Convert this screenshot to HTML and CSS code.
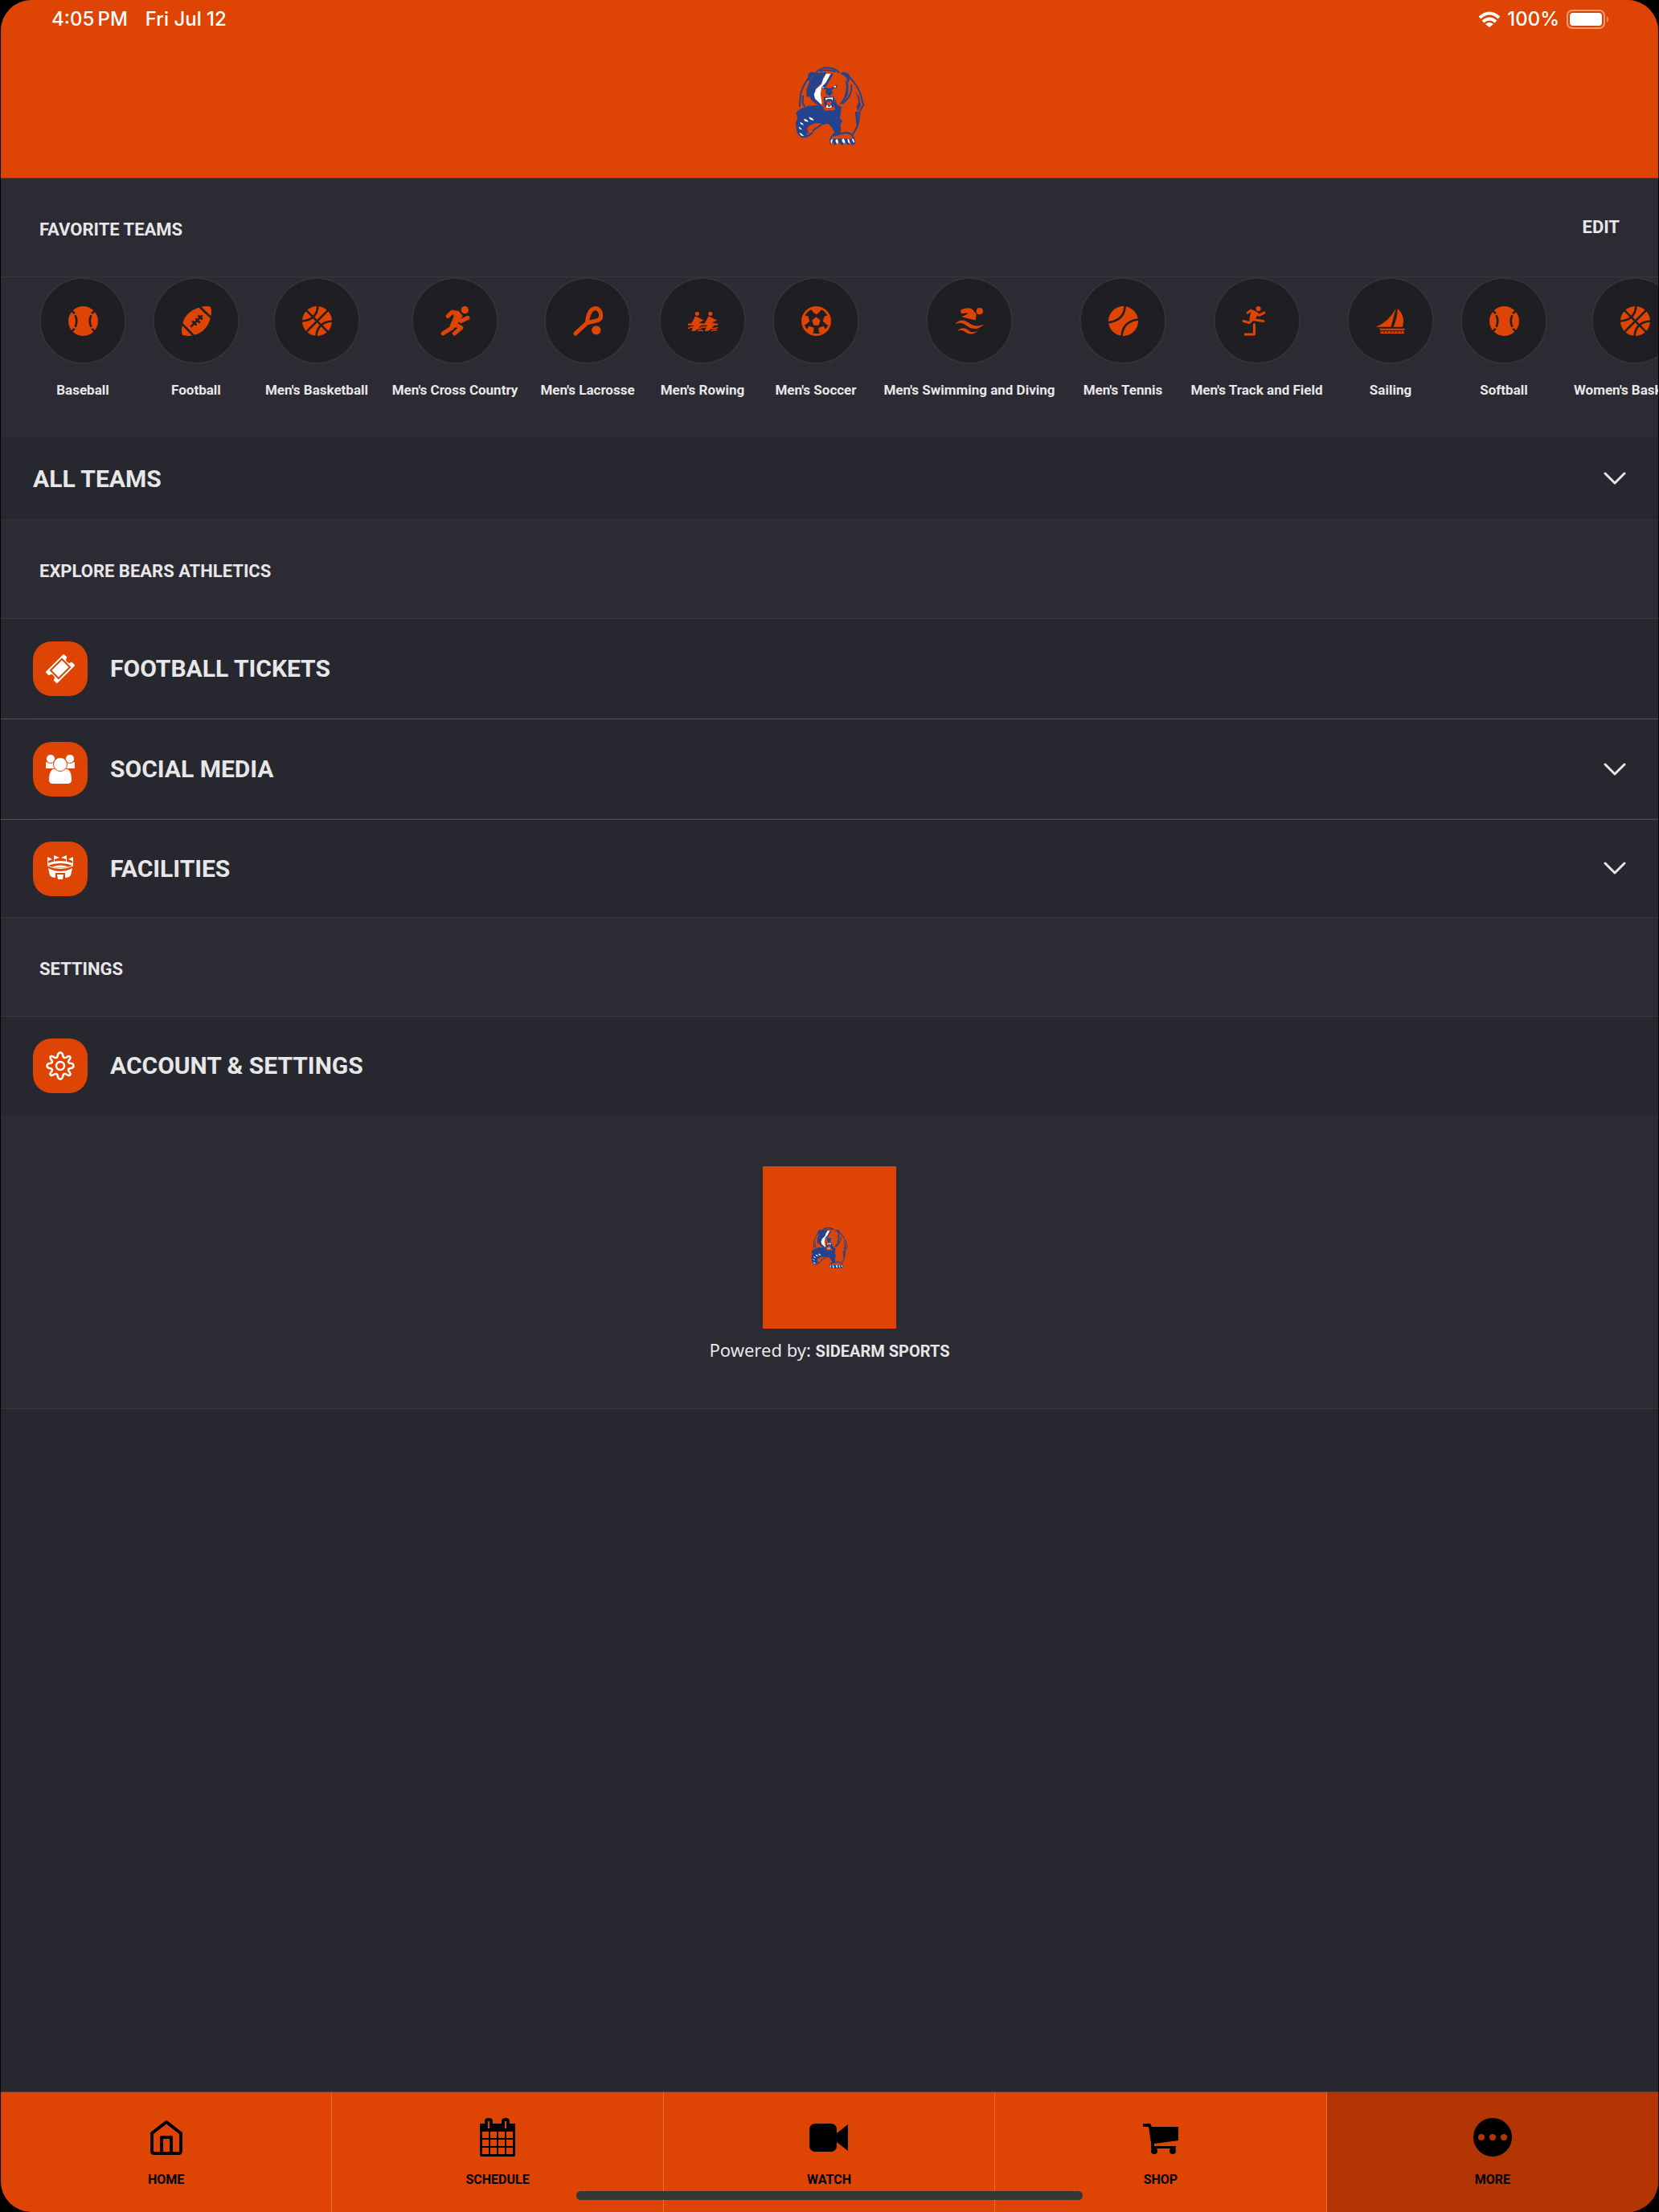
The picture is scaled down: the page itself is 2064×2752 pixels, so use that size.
FILE: index.html
```html
<!DOCTYPE html>
<html lang="en">
<head>
    <meta charset="UTF-8">
    <meta name="viewport" content="width=device-width, initial-scale=1.0">
    <title>Bears Athletics - More</title>
    <link rel="stylesheet" href="styles.css">
</head>
<body>
    <!-- Shared icon shapes -->
    <svg class="sprite" aria-hidden="true">
        <symbol id="bear" viewBox="90 68 258 298">
            <g fill="none" stroke="#23438f" stroke-width="6" stroke-linejoin="round">
                <path d="M168 92 Q184 77 204 75 Q232 73 254 93 M182 88 Q208 78 240 90"/>
                <path d="M142 110 Q122 136 112 166 L108 196 L107 220 M119 178 L118 206 L126 220"/>
                <path d="M288 106 Q322 140 332 172 L343 213 L330 235 L326 270 L320 294 L304 322"/>
                <path d="M298 138 Q302 164 288 184 Q280 196 266 208"/>
                <path d="M108 232 L97 242 L102 262 L95 280 L100 312 L120 332 L142 326 Q152 320 158 306 L188 286"/>
                <path d="M159 280 Q136 288 134 304 Q134 320 150 318" />
                <path d="M222 336 L232 322 Q248 315 264 319 Q288 310 302 326 L308 336"/>
            </g>
            <path fill="#23438f" d="M138 102 Q140 91 152 90 L171 94 Q150 106 142 126 L136 118Z M291 102 Q284 90 268 91 L256 96 Q274 102 282 116 L284 138 L291 122Z"/>
            <path fill="#23438f" d="M170 94 L206 91 L190 128 L166 154 L162 180 L188 216 L196 224 Q154 208 142 180 L132 184 L133 154 L144 124 L156 106Z"/>
            <path fill="#23438f" d="M108 228 L138 216 L170 214 L196 220 L204 232 L238 232 L234 212 L240 192 L246 212 L262 220 L256 262 L266 272 L258 284 L260 306 L256 324 L230 330 L236 316 L228 298 L212 282 L194 286 L180 280 L168 280 L142 288 L132 304 L134 334 L112 334 L97 316 L94 282 L102 260 L96 242Z"/>
            <path fill="#23438f" d="M220 96 L232 97 L212 132 L204 146 L186 145 L194 132 L208 116Z M186 142 L206 150 L222 150 L246 137 L244 150 L232 152 L226 158 L229 168 L220 180 L206 174 L202 164 L206 156 L188 152Z"/>
            <path fill="#23438f" d="M196 183 L236 182 L236 214 L228 224 L206 224 L198 216Z"/>
            <path fill="#23438f" d="M312 162 L326 180 L334 214 L322 238 L318 218 L326 204 L322 184Z M312 238 L324 238 L324 276 L318 292Z M276 118 L288 138 L286 174 L268 206 L254 212 L272 184 L280 150Z"/>
            <path fill="#23438f" d="M217 338 L310 338 L314 356 L302 362 L292 350 L290 362 L276 354 L264 362 L252 352 L238 362 L230 350 L220 360Z"/>
            <path fill="#fff" d="M205 97 L222 97 L204 130 L188 147 L184 174 L189 202 L188 212 L164 190 L160 174 L168 154 L188 136 L194 116Z"/>
            <path fill="#fff" d="M190 146l7 1v3h-7z M233 144l8-2v6h-6z M202 187 L230 185 L229 196 L224 190 L208 191 L205 198Z M205 217 L210 211 L212 219 L220 219 L223 211 L226 222 L206 224Z"/>
            <path fill="#de4504" d="M208 196 L216 202 L223 196 L224 208 L216 216 L208 208Z M194 222 L202 224 L206 230 L232 230 L232 224 L236 232 L200 234Z M134 302 Q138 288 162 282 L164 286 Q154 294 154 312 L142 320Z"/>
            <path fill="#fff" d="M140 257l14 5 6 9-14-4z M122 264l12 4 6 8-14-3z M108 276l9 4 6 8-12-4z M103 293l8 5 5 8-10-5z M105 316l8 2 11 11-12-3z M222 344l8-7-3 14-4 7z M239 345l7-7 5 12-6 8z M264 339l7-1 5 13-4 5-8-8z M284 338l6 3 4 15-8-5z M300 338l7 2 4 14-7-5z"/>
        </symbol>
        <symbol id="baseball" viewBox="0 0 36 36">
            <ellipse cx="18" cy="18" rx="18" ry="18"/>
            <path class="cut" d="M4 5 Q10 11 10 18 T4 31 M32 5 Q26 11 26 18 T32 31"/>
            <path class="stitch" d="M5 11l6-2M5 25l6 2M31 11l-6-2M31 25l-6 2"/>
        </symbol>
        <symbol id="football" viewBox="0 0 36 36">
            <path d="M23 1 Q32-1 35 1 Q37 6 35 14 Q32 25 24 31 Q17 36 8 36 L1 35 Q-1 30 1 22 Q4 6 23 1Z"/>
            <path class="cut" d="M20-1 L37 15 M-1 20 L16 37 M11 25 L25 11 M13 18 L18 23 M17 15 L22 20 M20 11 L25 16"/>
        </symbol>
        <symbol id="basketball" viewBox="0 0 36 36">
            <circle cx="18" cy="18" r="18"/>
            <path class="cut" d="M4 4 L32 32 M32 4 L4 32 M19-1 Q18 17-1 18 M17 37 Q18 19 37 18"/>
        </symbol>
        <symbol id="runner" viewBox="0 0 36 36">
            <circle cx="29.500" cy="4.500" r="4.500"/>
            <path class="limb" d="M9 12 L14 7 L21 8 M25 18 L33 14 M14 26 L3 33 M18 22 L25 26 L17 33"/>
            <path d="M14 5 L24 8 L27 12 L21 21 L24 25 L17 26 L11 24 L16 13Z"/>
        </symbol>
        <symbol id="lacrosse" viewBox="0 0 36 36">
            <path class="limb" d="M3 33 L17 20 Q18 8 23 4 Q29 0 33 7 Q36 14 30 17 L18 20"/>
            <circle cx="28" cy="29" r="5.500"/>
        </symbol>
        <symbol id="rowing" viewBox="0 0 36 36">
            <circle cx="11" cy="9" r="2.500"/><circle cx="27" cy="9" r="2.500"/>
            <path d="M9 12 L19 17 L13 20 L18 21 L9 30 L4 30 L8 22 L4 21Z M25 12 L35 17 L29 20 L34 21 L25 30 L20 30 L24 22 L20 21Z M0 21 H36 V23 H0Z"/>
            <path class="thin" d="M0 27 Q4 24 8 26 T16 26 T24 26 T36 26 M12 30 Q15 28 18 30 M28 30 Q31 28 35 29"/>
        </symbol>
        <symbol id="soccer" viewBox="0 0 36 36">
            <circle cx="18" cy="18" r="18"/>
            <circle cx="18" cy="18" r="15" fill="#1f1e23"/>
            <path d="M11 2 H25 L22 7 L18 10 L14 7Z M2 11 L8 12 L10 18 L6 22 L2 23Z M34 11 L28 12 L26 18 L30 22 L34 23Z M6 29 L9 24 L15 26 L15 31 L12 34Z M30 29 L27 24 L21 26 L21 31 L24 34Z M18 13 L23 17 L21 23 H15 L13 17Z"/>
        </symbol>
        <symbol id="swim" viewBox="0 0 36 36">
            <circle cx="30" cy="6" r="4"/>
            <path d="M8 4 Q16 1 20 3 L26 9 L25 17 L8 13 L16 9 L14 8 L8 9 Q6 6 8 4Z"/>
            <path d="M0 22 Q6 15 13 18 L22 23 Q28 25 35 22 Q28 30 18 26 L10 21 Q5 19 0 22Z M3 30 Q7 25 13 27 L19 31 Q23 32 28 30 Q21 36 14 32 Q8 27 3 30Z"/>
        </symbol>
        <symbol id="tennis" viewBox="0 0 36 36">
            <circle cx="18" cy="18" r="18"/>
            <path class="cut" d="M20-1 Q20 17-1 20 M16 37 Q17 18 37 16"/>
        </symbol>
        <symbol id="track" viewBox="0 0 36 36">
            <circle cx="20" cy="3" r="3"/>
            <path class="track-line" d="M7 8 L11 5 L17 8 L13 16 L26 18 M17 8 L21 11 L27 8 M13 16 L9 20 L2 18 M15 22 V34 H4"/>
            <path d="M11 6 L17 7 L19 11 L16 16 L9 17Z"/>
        </symbol>
        <symbol id="sail" viewBox="0 0 36 36">
            <path d="M24 3 L18 25 H0 Q15 19 24 3Z M26 3 Q36 12 32 25 H21 Q26 14 26 3Z M4 27 H35 L34 29 H5Z M5 30h29v3H5z"/>
            <path class="hull-line" d="M5 31 H34"/>
        </symbol>
        <symbol id="chevron" viewBox="0 0 28 17">
            <path fill="none" stroke="#e7e7e7" stroke-width="3" stroke-linecap="round" stroke-linejoin="round" d="M2 2 L14 14 L26 2"/>
        </symbol>
    </svg>

    <div class="screen">
        <header>
            <div class="status">
                <span>4:05&#8201;PM</span>
                <span class="date">Fri Jul 12</span>
                <svg class="wifi" viewBox="0 0 28 20" fill="none" stroke="#fff" stroke-width="4">
                    <path d="M2 8 Q14-3 26 8 M6 13 Q14 6 22 13"/>
                    <path fill="#fff" stroke="none" d="M9 16 Q14 12 19 16 L14 20Z"/>
                </svg>
                <span>100%</span>
                <svg class="battery" viewBox="0 0 54 24">
                    <rect x="1" y="1" width="46" height="22" rx="6" fill="none" stroke="#ef9b78" stroke-width="2"/>
                    <rect x="4" y="4" width="40" height="16" rx="4" fill="#fff"/>
                    <path d="M50 8 Q54 12 50 16Z" fill="#ef9b78"/>
                </svg>
            </div>
            <svg class="logo" role="img" aria-label="Bears"><use href="#bear"/></svg>
        </header>

        <main>
            <!-- Favorite teams -->
            <div class="section-title bordered">
                <h2>FAVORITE TEAMS</h2>
                <button class="edit" type="button">EDIT</button>
            </div>
            <ul class="teams">
                <li><a href="#"><span class="circle"><svg><use href="#baseball"/></svg></span>Baseball</a></li>
                <li><a href="#"><span class="circle"><svg><use href="#football"/></svg></span>Football</a></li>
                <li><a href="#"><span class="circle"><svg><use href="#basketball"/></svg></span>Men's Basketball</a></li>
                <li><a href="#"><span class="circle"><svg><use href="#runner"/></svg></span>Men's Cross Country</a></li>
                <li><a href="#"><span class="circle"><svg><use href="#lacrosse"/></svg></span>Men's Lacrosse</a></li>
                <li><a href="#"><span class="circle"><svg><use href="#rowing"/></svg></span>Men's Rowing</a></li>
                <li><a href="#"><span class="circle"><svg><use href="#soccer"/></svg></span>Men's Soccer</a></li>
                <li><a href="#"><span class="circle"><svg><use href="#swim"/></svg></span>Men's Swimming and Diving</a></li>
                <li><a href="#"><span class="circle"><svg><use href="#tennis"/></svg></span>Men's Tennis</a></li>
                <li><a href="#"><span class="circle"><svg><use href="#track"/></svg></span>Men's Track and Field</a></li>
                <li><a href="#"><span class="circle"><svg><use href="#sail"/></svg></span>Sailing</a></li>
                <li><a href="#"><span class="circle"><svg><use href="#baseball"/></svg></span>Softball</a></li>
                <li><a href="#"><span class="circle"><svg><use href="#basketball"/></svg></span>Women's Basketball</a></li>
            </ul>
            <button class="row all-teams" type="button">ALL TEAMS <svg class="chevron"><use href="#chevron"/></svg></button>

            <!-- Explore -->
            <div class="section-title bordered"><h2>EXPLORE BEARS ATHLETICS</h2></div>
            <a class="row divided" href="#">
                <span class="icon">
                    <svg viewBox="0 0 36 36">
                        <g transform="rotate(-45 18 18)">
                            <path fill="#fff" d="M2 8 H34 V14 A4 4 0 0 0 34 22 V28 H2 V22 A4 4 0 0 0 2 14Z"/>
                            <rect x="8" y="11" width="20" height="14" fill="#fff" stroke="#de4504" stroke-width="2"/>
                        </g>
                    </svg>
                </span>
                FOOTBALL TICKETS
            </a>
            <button class="row divided" type="button">
                <span class="icon">
                    <svg viewBox="0 0 36 36" fill="#fff" stroke="#de4504">
                        <path stroke="none" d="M0 9 Q5 11 10 9 L14 14 V17 H0Z M36 9 Q31 11 26 9 L22 14 V17 H36Z"/>
                        <circle cx="6" cy="5" r="5.500"/><circle cx="30" cy="5" r="5.500"/>
                        <path d="M3.500 31 Q3.500 16 13 17 H23 Q32.500 16 32.500 31 Q32.500 36.500 27 36.500 H9 Q3.500 36.500 3.500 31Z"/>
                        <circle cx="18" cy="12" r="8.500"/>
                    </svg>
                </span>
                SOCIAL MEDIA
                <svg class="chevron"><use href="#chevron"/></svg>
            </button>
            <button class="row facilities bordered" type="button">
                <span class="icon">
                    <svg viewBox="0 0 36 36" fill="#fff">
                        <path d="M2 3 L8 6 L3 8 V11 H2Z M10 1 L17 4 L11 6 V9 H10Z M26 1 L19 4 L25 6 V9 H26Z M34 3 L28 6 L33 8 V11 H34Z"/>
                        <path d="M2 11 Q18 5 34 11 V14 Q18 8 2 14Z M8 15 Q18 12 28 15 Q18 18 8 15Z"/>
                        <path fill="none" stroke="#fff" d="M2 14 Q18 21 34 14"/>
                        <path d="M3 17 Q10 21 18 21 T33 17 L31 26 Q29 29 24 29 V23 H12 V29 Q7 29 5 26Z M14 25 H22 L21 31 H15Z"/>
                    </svg>
                </span>
                FACILITIES
                <svg class="chevron"><use href="#chevron"/></svg>
            </button>

            <!-- Settings -->
            <div class="section-title bordered"><h2>SETTINGS</h2></div>
            <a class="row" href="#">
                <span class="icon">
                    <svg viewBox="0 0 36 36" fill="none" stroke="#fff" stroke-width="2.500" stroke-linejoin="round">
                        <circle cx="18" cy="18" r="5"/>
                        <path d="M18 1.500 C21 1.500 21 4 21.500 6.500 Q22.500 9 25.500 7.500 C27.500 6 28.500 5 30 6.500 C31.500 8 30 9.500 28.500 11.500 Q27 14 30 14.800 C33 15 34.500 15.500 34.500 18 C34.500 20.500 33 21 30 21.200 Q27 22 28.500 24.500 C30 26.500 31.500 28 30 29.500 C28.500 31 27.500 30 25.500 28.500 Q22.500 27 21.500 29.500 C21 32 21 34.500 18 34.500 C15 34.500 15 32 14.500 29.500 Q13.500 27 10.500 28.500 C8.500 30 7.500 31 6 29.500 C4.500 28 6 26.500 7.500 24.500 Q9 22 6 21.200 C3 21 1.500 20.500 1.500 18 C1.500 15.500 3 15 6 14.800 Q9 14 7.500 11.500 C6 9.500 4.500 8 6 6.500 C7.500 5 8.500 6 10.500 7.500 Q13.500 9 14.500 6.500 C15 4 15 1.500 18 1.500Z"/>
                    </svg>
                </span>
                ACCOUNT &amp; SETTINGS
            </a>

            <div class="powered">
                <div class="badge"><svg role="img" aria-label="Bears"><use href="#bear"/></svg></div>
                <p>Powered by: <strong>SIDEARM SPORTS</strong></p>
            </div>
        </main>

        <nav>
            <a href="#">
                <svg viewBox="0 0 48 48" fill="none" stroke="#000" stroke-width="4" stroke-linejoin="round">
                    <path d="M6 19 L24 5 L42 19 V41 Q42 44 39 44 H9 Q6 44 6 41Z M18 44 V24 H30 V44"/>
                </svg>
                HOME
            </a>
            <a href="#">
                <svg viewBox="0 0 48 48">
                    <path fill-rule="evenodd" d="M2 7 H8 V4 Q8 0 13 0 T18 4 V7 H29 V4 Q29 0 34 0 T39 4 V7 H46 V46 Q46 48 44 48 H4 Q2 48 2 46Z M12 4 V13 H14 V4Z M33 4 V13 H35 V4Z M5 17 V25 H13 V17Z M15 17 V25 H23 V17Z M25 17 V25 H33 V17Z M35 17 V25 H43 V17Z M5 27 V35 H13 V27Z M15 27 V35 H23 V27Z M25 27 V35 H33 V27Z M35 27 V35 H43 V27Z M5 37 V45 H13 V37Z M15 37 V45 H23 V37Z M25 37 V45 H33 V37Z M35 37 V45 H43 V37Z"/>
                </svg>
                SCHEDULE
            </a>
            <a href="#">
                <svg viewBox="0 0 48 48"><rect x="0" y="7" width="34" height="35" rx="7"/><path d="M34 19 L48 8 V41 L34 30Z"/></svg>
                WATCH
            </a>
            <a href="#">
                <svg viewBox="0 0 48 48">
                    <path d="M2 7 H11 L13 11 H46 V28 L16 32 V35 H43 V38 H12 V31 L9 11 H2Z"/>
                    <circle cx="16" cy="41" r="4"/><circle cx="39" cy="41" r="4"/>
                </svg>
                SHOP
            </a>
            <a class="active" href="#">
                <svg viewBox="0 0 48 48">
                    <circle cx="24" cy="24" r="24"/>
                    <g fill="#b23503"><circle cx="10" cy="24" r="4"/><circle cx="24" cy="24" r="4"/><circle cx="38" cy="24" r="4"/></g>
                </svg>
                MORE
            </a>
            <span class="home-bar"></span>
        </nav>
    </div>
</body>
</html>
```
FILE: styles.css
```css
* {
    box-sizing: border-box;
}
body {
    margin: 0;
    background: #000;
    color: #e7e7e7;
    font-family: Roboto, sans-serif;
    font-weight: bold;
}
a {
    color: inherit;
    text-decoration: none;
}
button {
    border: none;
    background: none;
    color: inherit;
    font: inherit;
    cursor: pointer;
}
.sprite {
    display: none;
}
.screen {
    display: flex;
    flex-direction: column;
    min-height: 100vh;
    margin: 0 1px;
    border-radius: 38px;
    overflow: hidden;
    background: #26272f;
}
main {
    flex: 1;
}

/* Header */
header {
    height: 222px;
    background: #de4504;
    border-bottom: 1px solid #7b3a1b;
}
.status {
    display: flex;
    align-items: center;
    height: 48px;
    padding: 0 60px 0 63px;
    color: #fff;
    font: 500 24px/28px Inter, sans-serif;
}
.date {
    margin-left: 22px;
}
.wifi {
    width: 28px;
    height: 20px;
    margin: 0 8px 0 auto;
}
.battery {
    width: 54px;
    height: 24px;
    margin-left: 9px;
}
.logo {
    display: block;
    width: 87px;
    height: 100px;
    margin: 34px auto 0;
}

/* Section headings */
.section-title {
    display: flex;
    align-items: center;
    justify-content: space-between;
    height: 123px;
    padding: 0 48px;
    background: #2c2a33;
}
h2 {
    margin: 6px 0 0;
    font-size: 22px;
    line-height: 28px;
}
.edit {
    padding: 0;
    font-size: 22px;
    line-height: 28px;
}
.bordered {
    border-bottom: 1px solid #36363b;
}

/* Team list */
.teams {
    display: grid;
    grid-template-columns: 108px 108px 126px 152px 112px 108px 108px 208px 108px 159px 108px 108px 152px;
    gap: 33px;
    height: 200px;
    margin: 0;
    padding: 0 0 0 48px;
    overflow: hidden;
    list-style: none;
    background: #2c2a33;
}
.teams a {
    display: flex;
    flex-direction: column;
    align-items: center;
    gap: 20px;
    font-size: 17px;
    line-height: 24px;
    white-space: nowrap;
}
.circle {
    display: flex;
    align-items: center;
    justify-content: center;
    width: 108px;
    height: 108px;
    border: 2px solid #333235;
    border-radius: 50%;
    background: #1f1e23;
}
.circle svg {
    width: 37px;
    height: 37px;
    fill: #de4504;
}
.cut {
    fill: none;
    stroke: #1f1e23;
    stroke-width: 2.5;
}
.hull-line {
    fill: none;
    stroke: #1f1e23;
    stroke-width: 1;
    stroke-dasharray: 2 2;
}
.stitch {
    fill: none;
    stroke: #de4504;
    stroke-width: 2;
}
.limb {
    fill: none;
    stroke: #de4504;
    stroke-width: 5;
    stroke-linecap: round;
    stroke-linejoin: round;
}
.track-line {
    fill: none;
    stroke: #de4504;
    stroke-width: 3;
    stroke-linecap: round;
    stroke-linejoin: round;
}
.thin {
    fill: none;
    stroke: #de4504;
    stroke-width: 1.5;
}

/* Menu rows */
.row {
    display: flex;
    align-items: center;
    width: 100%;
    height: 122px;
    padding: 0 40px;
    font-size: 30px;
    line-height: 36px;
    text-align: left;
}
.all-teams {
    height: 102px;
    border-bottom: 1px solid #303137;
}
.divided {
    height: 125px;
    border-bottom: 1px solid #505157;
    background: linear-gradient(#303136, #303136) 40px 100% / 100% 1px no-repeat;
}
.icon {
    display: flex;
    align-items: center;
    justify-content: center;
    width: 68px;
    height: 68px;
    margin-right: 28px;
    border-radius: 23px;
    background: #de4504;
}
.icon svg {
    width: 36px;
    height: 36px;
}
.chevron {
    width: 28px;
    height: 17px;
    margin-left: auto;
}

/* Footer */
.powered {
    height: 366px;
    padding-top: 64px;
    border-bottom: 1px solid #36363b;
    background: #2c2a33;
    text-align: center;
}
.badge {
    display: flex;
    align-items: center;
    justify-content: center;
    width: 166px;
    height: 202px;
    margin: 0 auto;
    background: #de4504;
}
.badge svg {
    width: 46px;
    height: 53px;
}
.powered p {
    margin: 12px 0 0;
    font: 22px/28px "Noto Sans", sans-serif;
}
.powered strong {
    font: bold 20px/28px Roboto, sans-serif;
}

/* Tab bar */
nav {
    display: grid;
    grid-template-columns: repeat(5, 1fr);
    position: relative;
    height: 150px;
    border-top: 1px solid #5b3a30;
    background: #de4504;
    color: #000;
}
nav a {
    display: flex;
    flex-direction: column;
    align-items: center;
    gap: 17px;
    padding-top: 32px;
    border-right: 1px solid #e56d3a;
    font-size: 16px;
    line-height: 24px;
}
nav svg {
    width: 48px;
    height: 48px;
}
.active {
    border-right: none;
    background: #b23503;
}
.home-bar {
    position: absolute;
    left: 50%;
    bottom: 15px;
    width: 630px;
    height: 11px;
    margin-left: -315px;
    border-radius: 6px;
    background: #363636;
}
```
